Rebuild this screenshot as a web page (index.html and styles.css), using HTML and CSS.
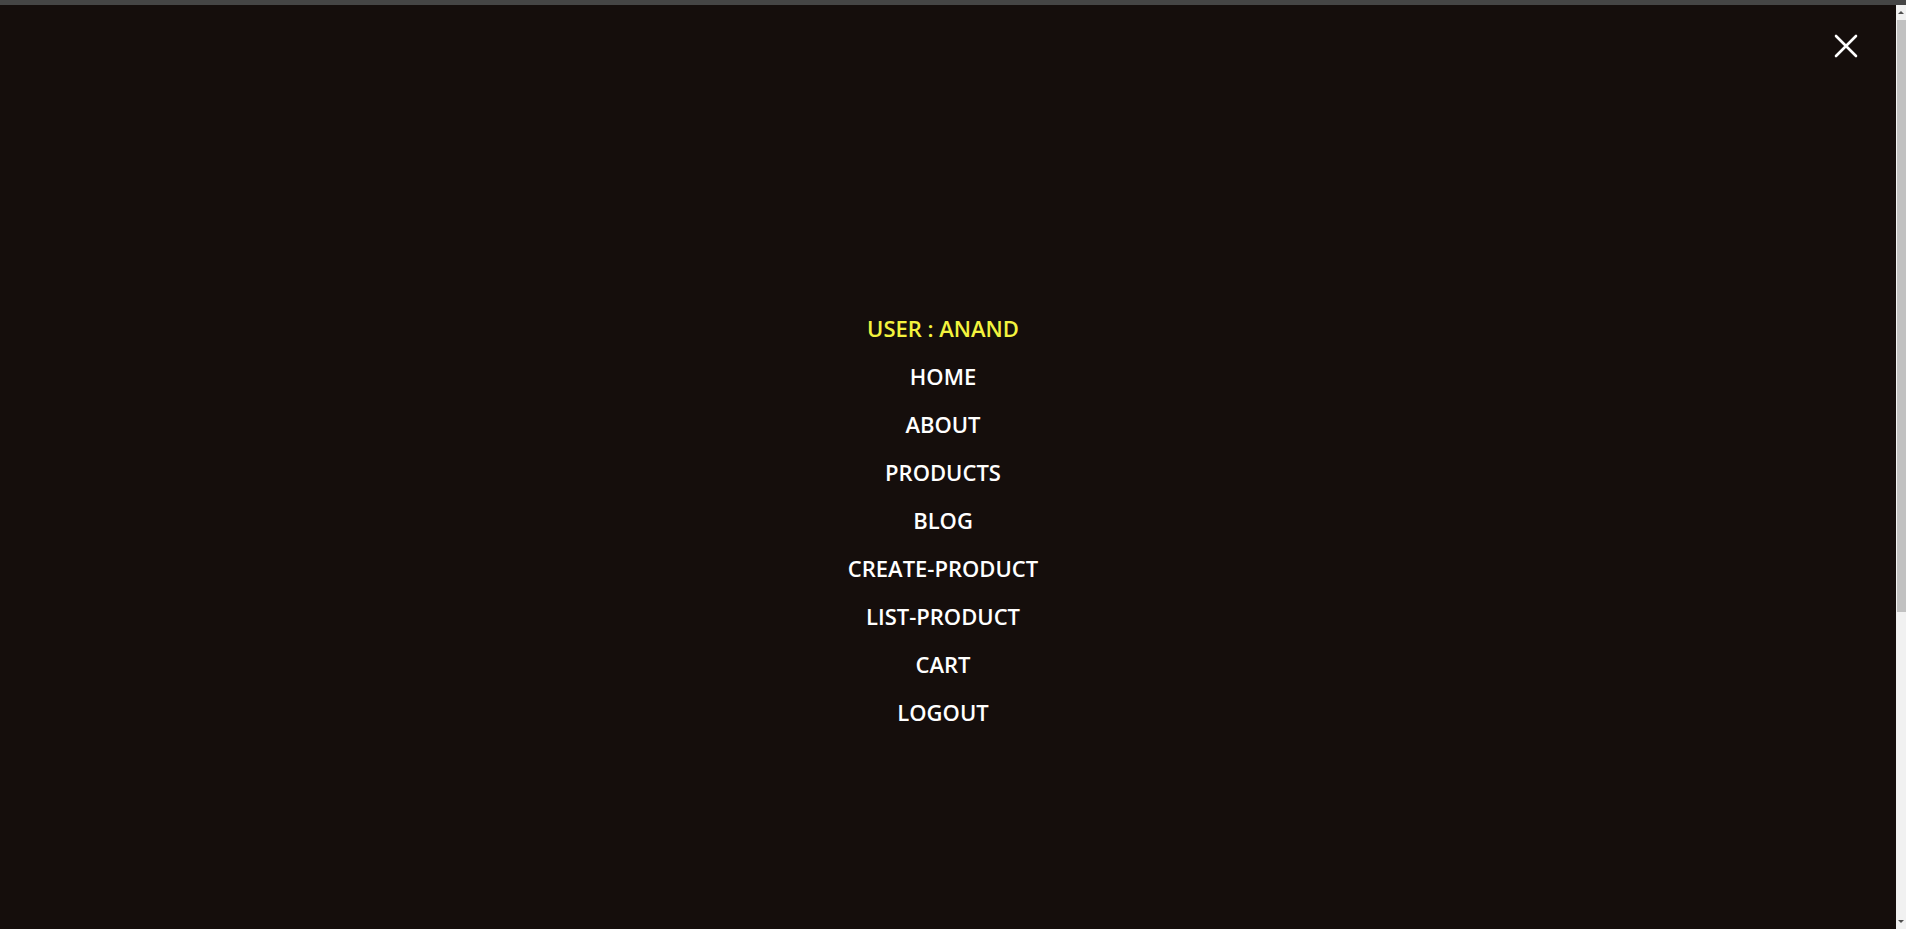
FILE: index.html
```html
<!DOCTYPE html>
<html lang="en">
<head>
<meta charset="utf-8">
<title>Menu</title>
<link rel="stylesheet" href="styles.css">
</head>
<body>
<div class="topbar"></div>
<div class="frame">
  <main class="overlay">
    <button class="close" aria-label="Close">
      <svg width="24" height="24" viewBox="0 0 24 24"><path d="M2 2 L22 22 M22 2 L2 22" stroke="#fff" stroke-width="2.6" stroke-linecap="round"/></svg>
    </button>
    <nav class="menu">
      <a class="item user">USER : ANAND</a>
      <a class="item">HOME</a>
      <a class="item">ABOUT</a>
      <a class="item">PRODUCTS</a>
      <a class="item">BLOG</a>
      <a class="item">CREATE-PRODUCT</a>
      <a class="item">LIST-PRODUCT</a>
      <a class="item">CART</a>
      <a class="item">LOGOUT</a>
    </nav>
  </main>
  <div class="scrollbar">
    <div class="arrow up"></div>
    <div class="track"><div class="thumb"></div></div>
    <div class="arrow down"></div>
  </div>
</div>
</body>
</html>
```
FILE: styles.css
```css
* { box-sizing: border-box; }
html, body { margin: 0; padding: 0; height: 100%; overflow: hidden; }
body { background: #150e0c; font-family: "Open Sans", "Liberation Sans", sans-serif; }
.topbar { height: 5px; background: #454545; }
.frame { display: flex; height: 924px; }
.overlay { flex: 1; background: #150e0c; position: relative; }
.close {
  position: absolute; top: 29px; right: 38px;
  width: 24px; height: 24px; padding: 0; border: 0; background: transparent;
}
.close svg { display: block; }
.menu {
  display: flex; flex-direction: column; align-items: center;
  padding-top: 299px; padding-right: 10px;
}
.item {
  display: block; height: 48px; line-height: 48px;
  font-size: 22px; font-weight: 600; color: #ffffff; text-decoration: none;
}
.item.user { color: #f3f33e; }
.scrollbar { width: 10px; background: #f1f1f1; display: flex; flex-direction: column; }
.arrow { height: 15px; display: flex; align-items: center; justify-content: center; }
.arrow.up::before {
  content: ""; border-left: 3px solid transparent; border-right: 3px solid transparent;
  border-bottom: 3px solid #505050;
}
.arrow.down::before {
  content: ""; border-left: 3px solid transparent; border-right: 3px solid transparent;
  border-top: 3px solid #505050;
}
.track { flex: 1; padding-left: 1px; }
.thumb { height: 592px; background: #c1c1c1; }
```
